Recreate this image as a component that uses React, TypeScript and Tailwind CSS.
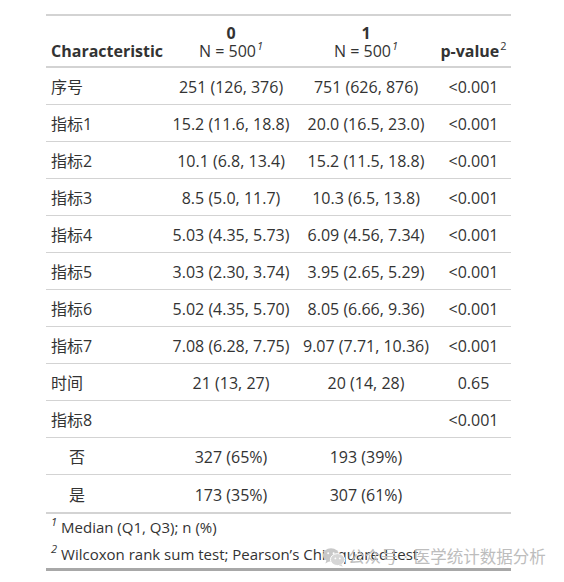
import React from 'react';

type Row = {
  label: string;
  a: string;
  b: string;
  p: string;
  indent?: boolean;
};

const rows: Row[] = [
  { label: '序号', a: '251 (126, 376)', b: '751 (626, 876)', p: '<0.001' },
  { label: '指标1', a: '15.2 (11.6, 18.8)', b: '20.0 (16.5, 23.0)', p: '<0.001' },
  { label: '指标2', a: '10.1 (6.8, 13.4)', b: '15.2 (11.5, 18.8)', p: '<0.001' },
  { label: '指标3', a: '8.5 (5.0, 11.7)', b: '10.3 (6.5, 13.8)', p: '<0.001' },
  { label: '指标4', a: '5.03 (4.35, 5.73)', b: '6.09 (4.56, 7.34)', p: '<0.001' },
  { label: '指标5', a: '3.03 (2.30, 3.74)', b: '3.95 (2.65, 5.29)', p: '<0.001' },
  { label: '指标6', a: '5.02 (4.35, 5.70)', b: '8.05 (6.66, 9.36)', p: '<0.001' },
  { label: '指标7', a: '7.08 (6.28, 7.75)', b: '9.07 (7.71, 10.36)', p: '<0.001' },
  { label: '时间', a: '21 (13, 27)', b: '20 (14, 28)', p: '0.65' },
  { label: '指标8', a: '', b: '', p: '<0.001' },
  { label: '否', a: '327 (65%)', b: '193 (39%)', p: '', indent: true },
  { label: '是', a: '173 (35%)', b: '307 (61%)', p: '', indent: true },
];

const cols = 'grid grid-cols-[120px_130px_140px_75px]';

function Mark({ n, italic = true }: { n: string; italic?: boolean }) {
  return (
    <span
      className={`inline-block text-[11px] leading-none font-normal relative top-[-7px] ml-[1px] ${italic ? 'italic' : ''}`}
    >
      {n}
    </span>
  );
}

function WeChatIcon() {
  return (
    <svg width="24" height="20" viewBox="0 0 24 20" className="shrink-0">
      <ellipse cx="9" cy="8" rx="8.2" ry="6.8" fill="#c8c8c8" />
      <path d="M4.5 13 L3.4 16.4 L7.6 13.9 Z" fill="#c8c8c8" />
      <ellipse cx="15.6" cy="12.6" rx="7.2" ry="6" fill="#d6d6d6" stroke="#ffffff" strokeWidth="1" />
      <path d="M19.4 17.2 L20.8 19.8 L16.8 18.2 Z" fill="#d6d6d6" />
      <circle cx="6.2" cy="6.2" r="1" fill="#ffffff" />
      <circle cx="11.6" cy="6.2" r="1" fill="#ffffff" />
      <circle cx="13.4" cy="11.4" r="0.9" fill="#ffffff" />
      <circle cx="17.8" cy="11.4" r="0.9" fill="#ffffff" />
    </svg>
  );
}

export default function App() {
  return (
    <div
      className="relative w-[564px] h-[582px] bg-white text-[#333333]"
      style={{ fontFamily: '"Open Sans", "Noto Sans CJK SC", sans-serif' }}
    >
      <div className="pt-[14px] pl-[46px]">
        <div className="w-[465px]">
          {/* header */}
          <div className={`${cols} border-t-2 border-b-2 border-[#d3d3d3] text-[16px] leading-[18px]`}>
            <div className="flex items-end px-[5px] pt-[8px] pb-[6px] font-bold">Characteristic</div>
            <div className="flex flex-col items-center justify-end px-[5px] pt-[8px] pb-[6px] whitespace-nowrap">
              <span className="font-bold">0</span>
              <span>
                N = 500
                <Mark n="1" />
              </span>
            </div>
            <div className="flex flex-col items-center justify-end px-[5px] pt-[8px] pb-[6px] whitespace-nowrap">
              <span className="font-bold">1</span>
              <span>
                N = 500
                <Mark n="1" />
              </span>
            </div>
            <div className="flex items-end justify-center px-[5px] pt-[8px] pb-[6px] font-bold whitespace-nowrap">
              <span>
                p-value
                <Mark n="2" italic={false} />
              </span>
            </div>
          </div>

          {/* body */}
          {rows.map((r, i) => (
            <div
              key={i}
              className={`${cols} h-[37px] items-center pt-[2px] text-[16px] ${i < rows.length - 1 ? 'border-b border-[#d3d3d3]' : ''}`}
            >
              <div className={`px-[5px] ${r.indent ? 'pl-[23px]' : ''}`}>{r.label}</div>
              <div className="px-[5px] text-center whitespace-nowrap">{r.a}</div>
              <div className="px-[5px] text-center whitespace-nowrap">{r.b}</div>
              <div className="px-[5px] text-center whitespace-nowrap">{r.p}</div>
            </div>
          ))}

          {/* footnotes */}
          <div className="border-t-2 border-b-[3px] border-t-[#d3d3d3] border-b-[#a8a8a8] text-[15px]">
            <div className="px-[5px] h-[27px] flex items-center whitespace-nowrap">
              <span className="italic text-[11px] relative top-[-5px] mr-[4px]">1</span>
              <span>Median (Q1, Q3); n (%)</span>
            </div>
            <div className="px-[5px] h-[27px] flex items-center whitespace-nowrap">
              <span className="italic text-[11px] relative top-[-5px] mr-[4px]">2</span>
              <span>Wilcoxon rank sum test; Pearson’s Chi-squared test</span>
            </div>
          </div>
        </div>
      </div>

      {/* watermark */}
      <div className="absolute left-[322px] top-[547px] flex items-center whitespace-nowrap text-[16.5px] leading-[20px] text-[#bdbdbd]">
        <WeChatIcon />
        <span className="ml-[2px]">公众号</span>
        <span className="mx-[6px]">·</span>
        <span>医学统计数据分析</span>
      </div>
    </div>
  );
}
